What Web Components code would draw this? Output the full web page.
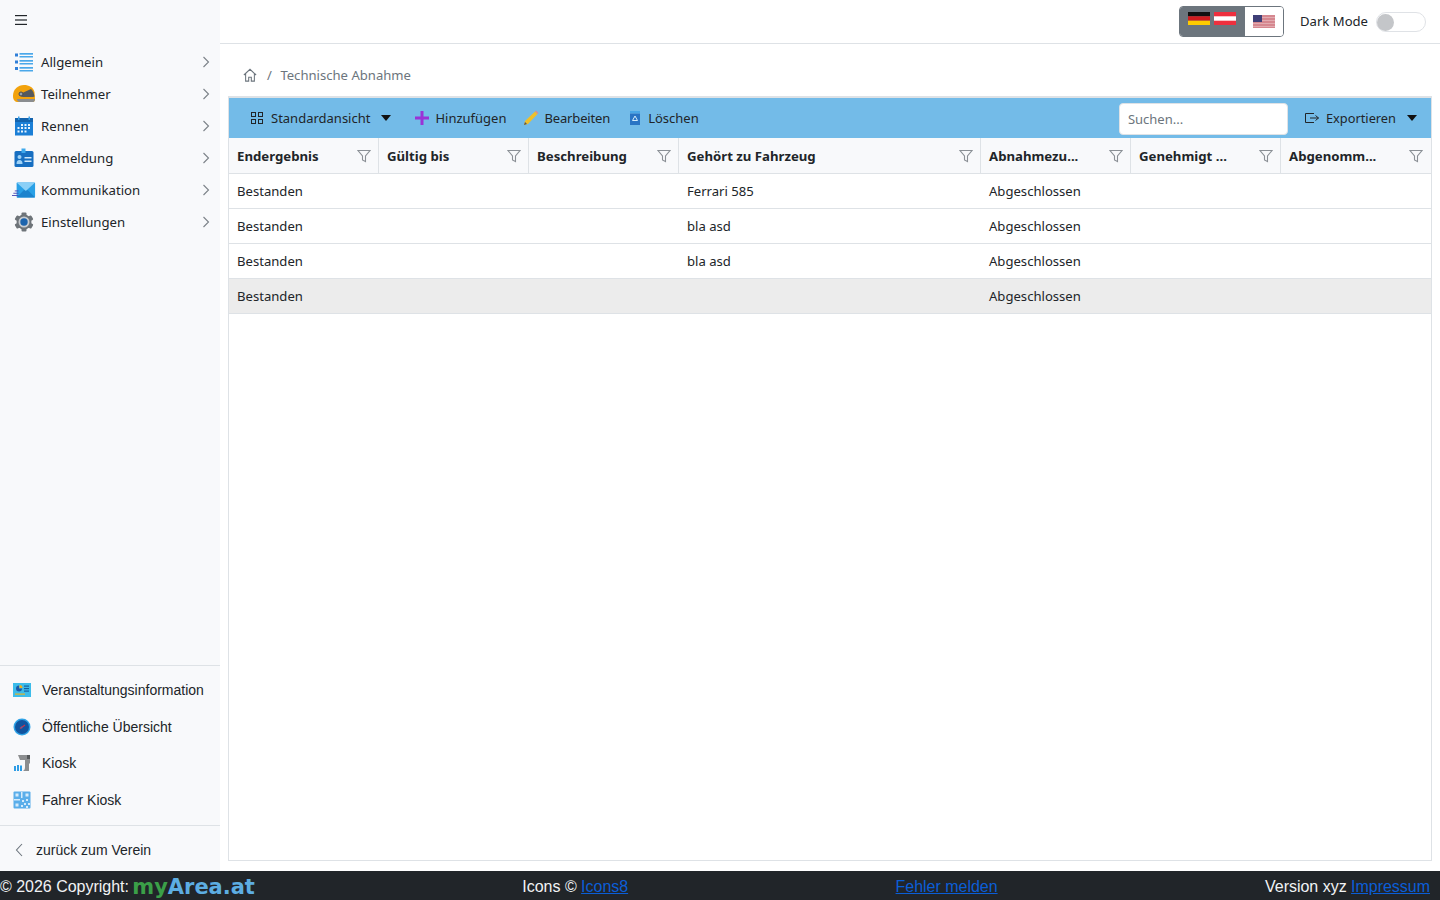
<!DOCTYPE html>
<html lang="de">
<head>
<meta charset="utf-8">
<title>Technische Abnahme</title>
<style>
html, body { margin: 0; height: 100%; }
body { font-family: "Noto Sans", "Open Sans", sans-serif; font-size: 14px; color: #212529; overflow: hidden; }
</style>
</head>
<body>
<app-shell>
	<side-nav slot="side"></side-nav>
	<top-bar slot="top"></top-bar>
	<bread-crumb slot="main" label="Technische Abnahme"></bread-crumb>
	<data-grid slot="main"></data-grid>
	<page-footer slot="bottom"></page-footer>
</app-shell>

<script>
(function() {
	const ICONS = {
		list: `<svg width="20" height="20" viewBox="0 0 20 20"><g fill="#2f7fd8"><rect x="1" y="1.500" width="3" height="3"/><rect x="1" y="8.500" width="3" height="3"/><rect x="1" y="15" width="3" height="3"/></g><g fill="#4aa8ea"><rect x="5.500" y="1" width="13.500" height="1.700"/><rect x="5.500" y="4" width="13.500" height="1.500"/><rect x="5.500" y="8" width="13.500" height="1.700"/><rect x="5.500" y="11" width="13.500" height="1.500"/><rect x="5.500" y="15" width="13.500" height="1.700"/><rect x="5.500" y="18" width="13.500" height="1.500"/></g></svg>`,
		helmet: `<svg width="24" height="20" viewBox="0 0 24 20"><path d="M1 12C1 5 6 1 12 1c5 0 9 2 10.500 7L23 15c0 2-1 3-2 3H6c-3 0-5-2-5-6z" fill="#f2a20c"/><path d="M8 10l11-5c2 2 3 4 3.500 7.500L21 13H11c-2 0-3-2-3-3z" fill="#55595e"/><path d="M5 15h18c0 2-1 3-2 3H8c-2 0-3-1-3-3z" fill="#8a8d90"/><circle cx="9" cy="10" r="2" fill="#9aa0a6" stroke="#44484c"/></svg>`,
		cal: `<svg width="20" height="20" viewBox="0 0 20 20"><rect x="1" y="2" width="18" height="17.500" fill="#1b7fd6"/><rect x="1" y="2" width="18" height="4" fill="#1464ae"/><rect x="4" y="0.500" width="1.500" height="3.500" fill="#39a0e8"/><rect x="14.500" y="0.500" width="1.500" height="3.500" fill="#39a0e8"/><g fill="#e8f4fd"><rect x="7" y="8" width="2" height="2"/><rect x="10.500" y="8" width="2" height="2"/><rect x="14" y="8" width="2" height="2"/><rect x="3.500" y="11" width="2" height="2"/><rect x="7" y="11" width="2" height="2"/><rect x="10.500" y="11" width="2" height="2"/><rect x="14" y="11" width="2" height="2"/><rect x="3.500" y="14.500" width="2" height="2"/><rect x="7" y="14.500" width="2" height="2"/><rect x="10.500" y="14.500" width="2" height="2"/></g></svg>`,
		badge: `<svg width="20" height="20" viewBox="0 0 20 20"><rect x="0.500" y="3" width="19" height="16" rx="1.500" fill="#176fc1"/><rect x="7.500" y="0.500" width="4" height="4.500" fill="#3fa9ec"/><circle cx="5.500" cy="9" r="2" fill="#9fd3f7"/><path d="M2.500 16c0-3 1-4 3-4s3 1 3 4z" fill="#9fd3f7"/><rect x="10.500" y="9" width="7" height="1.500" fill="#cfe8fa"/><rect x="10.500" y="12.500" width="7" height="1.500" fill="#cfe8fa"/></svg>`,
		mail: `<svg width="26" height="18" viewBox="0 0 26 18"><rect x="5" y="1" width="20" height="16" rx="1" fill="#29a0e6"/><path d="M5 1h20L15 10z" fill="#8bd0f7"/><path d="M5 17l8-8 2 1 2-1 8 8z" fill="#1b83cd"/><g fill="#4a4ab5"><rect x="3" y="9.500" width="4" height="1"/><rect x="1.500" y="12" width="5.500" height="1"/><rect x="0" y="14.500" width="7" height="1"/></g></svg>`,
		gear: `<svg width="20" height="20" viewBox="0 0 20 20"><g fill="#6e7479"><circle cx="10" cy="10" r="7.500"/><rect x="7.500" y="0.500" width="5" height="19" rx="1"/><rect x="7.500" y="0.500" width="5" height="19" rx="1" transform="rotate(60 10 10)"/><rect x="7.500" y="0.500" width="5" height="19" rx="1" transform="rotate(120 10 10)"/></g><circle cx="10" cy="10" r="5.500" fill="#c8ccd0"/><circle cx="10" cy="10" r="3.700" fill="#1d64ad"/></svg>`,
		info: `<svg width="20" height="16" viewBox="0 0 20 16"><rect x="1" y="1" width="18" height="14" fill="#3cbcea"/><path d="M7 3.500a3 3 0 1 0 3 3H7z" fill="#1d5aa8"/><path d="M7.500 3v3h3a3 3 0 0 0-3-3z" fill="#f2b01e"/><rect x="12" y="3.500" width="5" height="1.200" fill="#17609f"/><rect x="12" y="6" width="5" height="1.200" fill="#17609f"/><rect x="12" y="8.500" width="5" height="1.200" fill="#17609f"/><rect x="3" y="11.500" width="10" height="1.200" fill="#e2b42a"/></svg>`,
		gauge: `<svg width="18" height="18" viewBox="0 0 18 18"><circle cx="9" cy="9" r="8.500" fill="#2ea2e6"/><circle cx="9" cy="9" r="7" fill="#10549f"/><path d="M7 10.500L12 7" stroke="#c7354a" stroke-width="1.300"/><circle cx="8.500" cy="9.500" r="1" fill="#7d5a8c"/></svg>`,
		kiosk: `<svg width="18" height="18" viewBox="0 0 18 18"><path d="M5 1h12v8l-1 1v7h-6c1.500-1 2-2 2-4V6H7z" fill="#8c8e90"/><path d="M14 1h3v4h-3z" fill="#55585a"/><g fill="#2e9de6"><rect x="1" y="12" width="2" height="5"/><rect x="4" y="11" width="2" height="6"/><rect x="7" y="11.500" width="2" height="5.500"/></g></svg>`,
		qr: `<svg width="18" height="18" viewBox="0 0 18 18"><rect x="0.500" y="0.500" width="17" height="17" rx="1" fill="#5aaeea"/><g fill="#d5ebfb"><rect x="2.500" y="2.500" width="3" height="3"/><rect x="12.500" y="2.500" width="3" height="3"/><rect x="2.500" y="12.500" width="3" height="3"/><rect x="8" y="1" width="1.500" height="6"/><rect x="1" y="8" width="6" height="1.500"/><rect x="9" y="9" width="2" height="2"/><rect x="13" y="8" width="2" height="2"/><rect x="11" y="12" width="2" height="2"/><rect x="15" y="12" width="2" height="2"/><rect x="8" y="14" width="2" height="2"/><rect x="13" y="15" width="2" height="2"/></g></svg>`,
		chevron: `<svg width="8" height="12" viewBox="0 0 8 12"><path d="M1.500 1l5 5-5 5" fill="none" stroke="#7c8288" stroke-width="1.100"/></svg>`,
		back: `<svg width="8" height="14" viewBox="0 0 8 14"><path d="M7 1L1.500 7 7 13" fill="none" stroke="#6c757d" stroke-width="1.100"/></svg>`,
		home: `<svg width="14" height="14" viewBox="0 0 16 16"><path d="M1 8l7-6.500L15 8M3 6.500V15h3.500v-4.500h3V15H13V6.500" fill="none" stroke="#6c757d" stroke-width="1.200"/></svg>`,
		filter: `<svg width="14" height="14" viewBox="0 0 14 14"><path d="M1 1.500h12L8.500 7v5.500l-3-1.500V7z" fill="none" stroke="#8b9096" stroke-width="1.100"/></svg>`,
		views: `<svg width="14" height="14" viewBox="0 0 14 14"><g fill="none" stroke="#212529" stroke-width="1"><rect x="1.500" y="1.500" width="4" height="4"/><rect x="8.500" y="1.500" width="4" height="4"/><rect x="1.500" y="8.500" width="4" height="4"/><rect x="8.500" y="8.500" width="4" height="4"/></g></svg>`,
		plus: `<svg width="16" height="16" viewBox="0 0 16 16"><path d="M6.500 1h3v5.500H15v3H9.500V15h-3V9.500H1v-3h5.500z" fill="#9a32d6"/></svg>`,
		pencil: `<svg width="16" height="16" viewBox="0 0 16 16"><path d="M1 15l1-4L12 1.500l2.500 2.500L5 14z" fill="#efc02a"/><path d="M12 1.500l1-1 2.500 2.500-1 1z" fill="#e08a8a"/><path d="M1 15l1-3 2 2z" fill="#555"/></svg>`,
		bin: `<svg width="12" height="14" viewBox="0 0 12 14"><rect x="1" y="0" width="10" height="2" fill="#4aa6e6"/><rect x="1" y="2.500" width="10" height="11.500" fill="#2a74c4"/><path d="M6 5l2.500 4.500h-5z" fill="none" stroke="#d5ecfb" stroke-width="1"/></svg>`,
		exportIcon: `<svg width="14" height="12" viewBox="0 0 14 12"><path d="M9 1.500H.5v9H9M5 6h8.500M10.500 3.500L13.500 6l-3 2.500" fill="none" stroke="#212529" stroke-width="1"/></svg>`,
		caret: `<svg width="10" height="6" viewBox="0 0 10 6"><path d="M0 0h10L5 6z" fill="#111"/></svg>`,
		burger: `<svg width="12" height="10" viewBox="0 0 12 10"><g fill="#212529"><rect y="0" width="12" height="1.200"/><rect y="4.400" width="12" height="1.200"/><rect y="8.800" width="12" height="1.200"/></g></svg>`
	};

	let shellTemplate = document.createElement("template");
	shellTemplate.innerHTML = `
		<style>
		:host { display: grid; grid-template: 1fr 29px / 220px 1fr; height: 900px; }
		.side { display: flex; min-height: 0; }
		.content { display: flex; flex-direction: column; min-width: 0; min-height: 0; }
		.main { flex: 1; display: flex; flex-direction: column; padding: 0 8px 10px 8px; min-height: 0; }
		.bottom { grid-column: 1 / 3; display: flex; }
		</style>
		<div class="side"><slot name="side"></slot></div>
		<div class="content">
			<slot name="top"></slot>
			<div class="main"><slot name="main"></slot></div>
		</div>
		<div class="bottom"><slot name="bottom"></slot></div>
	`;
	class AppShell extends HTMLElement {
		constructor() {
			super();
			this.attachShadow({mode: "open"}).appendChild(shellTemplate.content.cloneNode(true));
		}
	}
	customElements.define("app-shell", AppShell);

	let sideTemplate = document.createElement("template");
	sideTemplate.innerHTML = `
		<style>
		:host { display: flex; flex-direction: column; width: 220px; background: #f8f9fb; }
		svg { display: block; }
		.burger { height: 40px; padding-left: 15px; display: flex; align-items: center; flex: none; }
		.menu { flex: 1; padding-top: 6px; }
		.row { height: 32px; display: flex; align-items: center; position: relative; font-size: 13.2px; padding-left: 41px; }
		.ico { position: absolute; left: 0; top: 0; width: 36px; height: 32px; display: flex; align-items: center; justify-content: center; padding-left: 12px; box-sizing: border-box; }
		.chev { position: absolute; right: 10px; top: 10px; height: 12px; }
		.extra { border-top: 1px solid #dee2e6; padding: 6px 0 7px; font-family: "Liberation Sans", Arial, sans-serif; font-size: 14px; }
		.extra div { height: 36.500px; display: flex; align-items: center; padding-left: 42px; position: relative; }
		.extra .ico { height: 36.500px; width: 32px; padding-left: 12px; }
		.back { border-top: 1px solid #dee2e6; height: 46px; padding-top: 2px; box-sizing: border-box; display: flex; align-items: center; padding-left: 15px; gap: 13px; font-family: "Liberation Sans", Arial, sans-serif; font-size: 14px; flex: none; }
		</style>
		<div class="burger">${ICONS.burger}</div>
		<div class="menu">
			<div class="row"><span class="ico">${ICONS.list}</span>Allgemein<span class="chev">${ICONS.chevron}</span></div>
			<div class="row"><span class="ico">${ICONS.helmet}</span>Teilnehmer<span class="chev">${ICONS.chevron}</span></div>
			<div class="row"><span class="ico">${ICONS.cal}</span>Rennen<span class="chev">${ICONS.chevron}</span></div>
			<div class="row"><span class="ico">${ICONS.badge}</span>Anmeldung<span class="chev">${ICONS.chevron}</span></div>
			<div class="row"><span class="ico">${ICONS.mail}</span>Kommunikation<span class="chev">${ICONS.chevron}</span></div>
			<div class="row"><span class="ico">${ICONS.gear}</span>Einstellungen<span class="chev">${ICONS.chevron}</span></div>
		</div>
		<div class="extra">
			<div><span class="ico">${ICONS.info}</span>Veranstaltungsinformation</div>
			<div><span class="ico">${ICONS.gauge}</span>Öffentliche Übersicht</div>
			<div><span class="ico">${ICONS.kiosk}</span>Kiosk</div>
			<div><span class="ico">${ICONS.qr}</span>Fahrer Kiosk</div>
		</div>
		<div class="back">${ICONS.back}<span>zurück zum Verein</span></div>
	`;
	class SideNav extends HTMLElement {
		constructor() {
			super();
			this.attachShadow({mode: "open"}).appendChild(sideTemplate.content.cloneNode(true));
		}
	}
	customElements.define("side-nav", SideNav);

	let topTemplate = document.createElement("template");
	topTemplate.innerHTML = `
		<style>
		:host { display: flex; align-items: center; justify-content: flex-end; height: 43px; border-bottom: 1px solid #dee2e6; padding-right: 14px; flex: none; }
		.langs { display: flex; height: 31px; margin-top: -1px; border: 1px solid #6c757d; border-radius: 4px; overflow: hidden; box-sizing: border-box; margin-right: 16px; }
		.lang { display: flex; align-items: center; gap: 4px; padding: 0 8px; }
		.lang.on { background: #6c757d; width: 49px; }
		.lang.on .flag { margin-top: -5px; }
		.lang.off { background: #fff; width: 22px; }
		.flag { width: 22px; height: 13px; display: block; }
		.dark { font-size: 13.1px; margin-right: 8px; margin-top: -2px; }
		.switch { width: 50px; height: 20px; border: 1px solid #dfe2e6; border-radius: 10px; box-sizing: border-box; position: relative; background: #fff; margin-top: 1px; }
		.knob { position: absolute; left: 0; top: 0.500px; width: 17px; height: 17px; border-radius: 50%; background: #c4c6c9; }
		</style>
		<div class="langs">
			<div class="lang on">
				<svg class="flag" viewBox="0 0 22 13"><rect width="22" height="4.300" fill="#111"/><rect y="4.300" width="22" height="4.400" fill="#d01c1f"/><rect y="8.700" width="22" height="4.300" fill="#fc0"/></svg>
				<svg class="flag" viewBox="0 0 22 13"><rect width="22" height="13" fill="#ee2f3e"/><rect y="4.300" width="22" height="4.400" fill="#fff"/></svg>
			</div>
			<div class="lang off">
				<svg class="flag" viewBox="0 0 22 13"><rect width="22" height="13" fill="#d5878f"/><g fill="#e2abb0"><rect y="2" width="22" height="1"/><rect y="5" width="22" height="1"/><rect y="8" width="22" height="1"/><rect y="11" width="22" height="1"/></g><rect width="9" height="7" fill="#3f3f77"/></svg>
			</div>
		</div>
		<span class="dark">Dark Mode</span>
		<div class="switch"><div class="knob"></div></div>
	`;
	class TopBar extends HTMLElement {
		constructor() {
			super();
			this.attachShadow({mode: "open"}).appendChild(topTemplate.content.cloneNode(true));
		}
	}
	customElements.define("top-bar", TopBar);

	class BreadCrumb extends HTMLElement {
		constructor() {
			super();
			this.attachShadow({mode: "open"}).innerHTML = `
				<style>
				:host { display: flex; align-items: center; height: 52px; padding: 10px 0 0 15px; box-sizing: border-box; flex: none; color: #6c757d; font-size: 13.1px; }
				svg { display: block; }
				.sep { margin: 0 8.500px 0 10px; }
				</style>
				${ICONS.home}<span class="sep">/</span><span>${this.getAttribute("label")}</span>
			`;
		}
	}
	customElements.define("bread-crumb", BreadCrumb);

	const COLUMNS = ["Endergebnis", "Gültig bis", "Beschreibung", "Gehört zu Fahrzeug", "Abnahmezu...", "Genehmigt ...", "Abgenomm..."];
	const ROWS = [
		["Bestanden", "", "", "Ferrari 585", "Abgeschlossen", "", ""],
		["Bestanden", "", "", "bla asd", "Abgeschlossen", "", ""],
		["Bestanden", "", "", "bla asd", "Abgeschlossen", "", ""],
		["Bestanden", "", "", "", "Abgeschlossen", "", ""]
	];

	let gridTemplate = document.createElement("template");
	gridTemplate.innerHTML = `
		<style>
		:host { display: flex; flex-direction: column; flex: 1; min-height: 0; border: 1px solid #dee2e6; border-top: 2px solid #dee2e6; background: #fff; font-size: 13.1px; }
		.tools { height: 40px; flex: none; background: #73bbe8; display: flex; align-items: center; padding-left: 21px; padding-right: 14px; font-size: 13px; }
		.tool { display: flex; align-items: center; color: #212529; }
		.tool svg { display: block; flex: none; }
		.views { gap: 7px; margin-right: 23px; }
		.add { gap: 5px; margin-right: 17px; }
		.edit { gap: 5px; margin-right: 19px; letter-spacing: -0.15px; }
		.del { gap: 7px; }
		.grow { flex: 1; }
		.search { width: 169px; height: 32px; box-sizing: border-box; border: 1px solid #dee2e6; border-radius: 4px; background: #fff; color: #6c757d; padding-left: 8px; display: flex; align-items: center; margin: 1px 17px 0 0; }
		.export { gap: 7px; font-size: 12.8px; }
		.export .caret { margin-left: 4px; }
		.table { display: grid; grid-template-columns: 150px 150px 150px 302px 150px 150px 1fr; }
		.head { height: 35px; border-bottom: 1px solid #dee2e6; border-right: 1px solid #dee2e6; background: #f8f9fb; display: flex; align-items: center; justify-content: space-between; padding: 0 7px 0 8px; font-weight: 700; font-size: 13.2px; }
		.head:nth-child(7) { border-right: 0; padding-right: 8px; }
		.cell { height: 34px; border-bottom: 1px solid #dee2e6; display: flex; align-items: center; padding-left: 8px; }
		.cell.sel { background: #ececec; }
		</style>
		<div class="tools">
			<div class="tool views">${ICONS.views}<span>Standardansicht</span><span style="margin-left:4px">${ICONS.caret}</span></div>
			<div class="tool add">${ICONS.plus}<span>Hinzufügen</span></div>
			<div class="tool edit">${ICONS.pencil}<span>Bearbeiten</span></div>
			<div class="tool del">${ICONS.bin}<span>Löschen</span></div>
			<div class="grow"></div>
			<div class="search">Suchen...</div>
			<div class="tool export">${ICONS.exportIcon}<span>Exportieren</span><span class="caret">${ICONS.caret}</span></div>
		</div>
		<div class="table" id="table"></div>
	`;
	class DataGrid extends HTMLElement {
		constructor() {
			super();
			this._shadowRoot = this.attachShadow({mode: "open"});
			this._shadowRoot.appendChild(gridTemplate.content.cloneNode(true));
			let table = this._shadowRoot.getElementById("table");
			COLUMNS.forEach(name => {
				let head = document.createElement("div");
				head.className = "head";
				head.innerHTML = `<span>${name}</span>${ICONS.filter}`;
				table.appendChild(head);
			});
			ROWS.forEach((row, i) => {
				row.forEach(text => {
					let cell = document.createElement("div");
					cell.className = i === 3 ? "cell sel" : "cell";
					cell.textContent = text;
					table.appendChild(cell);
				});
			});
		}
	}
	customElements.define("data-grid", DataGrid);

	let footerTemplate = document.createElement("template");
	footerTemplate.innerHTML = `
		<style>
		:host { display: flex; flex: 1; align-items: center; justify-content: space-between; background: #212529; color: #f1f3f5; font-family: "Liberation Sans", Arial, sans-serif; font-size: 16px; padding-top: 2px; box-sizing: border-box; }
		a { color: #0b5ed7; text-decoration: underline; }
		.logo { font-family: "DejaVu Sans", sans-serif; font-weight: 700; font-size: 21px; line-height: 0; margin-left: -1px; vertical-align: -2px; }
		.my { color: #3b9f48; }
		.area { color: #5dade2; }
		.part { white-space: nowrap; letter-spacing: -0.02px; }
		.last { padding-right: 10px; }
		</style>
		<div class="part">© 2026 Copyright: <span class="logo"><span class="my">my</span><span class="area">Area.at</span></span></div>
		<div class="part">Icons © <a>Icons8</a></div>
		<div class="part"><a>Fehler melden</a></div>
		<div class="part last">Version xyz <a>Impressum</a></div>
	`;
	class PageFooter extends HTMLElement {
		constructor() {
			super();
			this.attachShadow({mode: "open"}).appendChild(footerTemplate.content.cloneNode(true));
		}
	}
	customElements.define("page-footer", PageFooter);
})();
</script>
</body>
</html>
